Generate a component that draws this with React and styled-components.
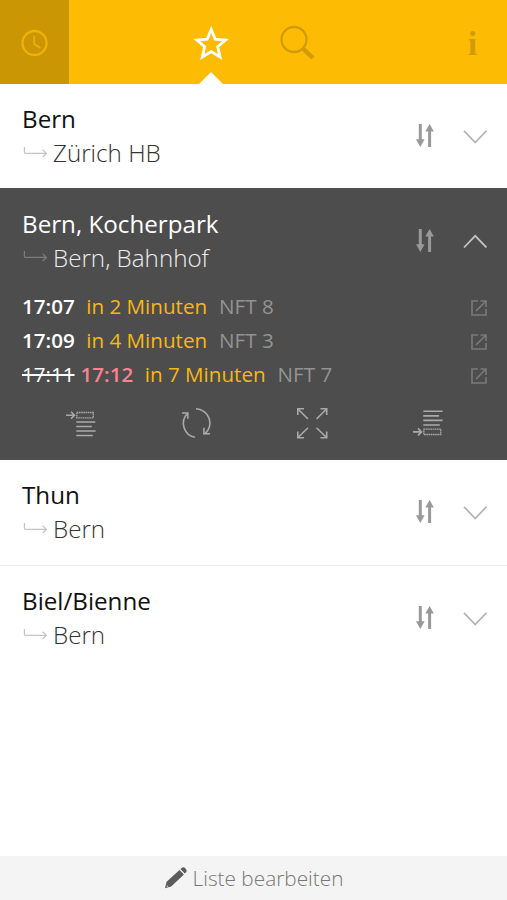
import React, { useState } from "react";
import styled, { createGlobalStyle } from "styled-components";

const GlobalStyle = createGlobalStyle`
  body {
    margin: 0;
    background: #fff;
    font-family: "Open Sans", sans-serif;
  }
`;

const Page = styled.div`
  display: flex;
  flex-direction: column;
  height: 900px;
  width: 100%;
  overflow: hidden;
`;

const Header = styled.header`
  display: grid;
  grid-template-columns: 68.5px 99.5px 86px 86px 1fr 69px;
  height: 83.6px;
  flex: none;
  background: #fdbb04;
`;

const Tab = styled.button`
  position: relative;
  display: flex;
  align-items: center;
  justify-content: center;
  grid-column: ${props => props.column};
  margin: 0;
  padding: 3px 0 0;
  border: 0;
  color: ${props =>
    props.isActive ? "#fff" : props.shaded ? "#f0b204" : "#d19b05"};
  background: ${props => (props.shaded ? "#cb9603" : "transparent")};
`;

const Pointer = styled.svg`
  position: absolute;
  bottom: 0;
  left: 31px;
`;

const InfoGlyph = styled.span`
  padding-top: 2px;
  font: bold 34px/34px "Liberation Serif", serif;
  color: #d19c06;
`;

const Connection = styled.section`
  box-sizing: border-box;
  flex: none;
  height: ${props => (props.isOpen ? "271.4px" : "104.8px")};
  padding: 18.2px 20px 0 22px;
  color: ${props => (props.isOpen ? "#fff" : "#111")};
  background: ${props => (props.isOpen ? "#4d4d4d" : "#fff")};
  border-top: ${props => (props.divider ? "1px solid #eaeaea" : "0")};
`;

const Summary = styled.div`
  display: flex;
  justify-content: space-between;
`;

const From = styled.div`
  font-size: 24.2px;
  line-height: 34px;
  white-space: nowrap;
`;

const To = styled.div`
  display: flex;
  align-items: center;
  gap: 6px;
  font-size: 24.2px;
  font-weight: 300;
  line-height: 33.6px;
  white-space: nowrap;
  color: ${props => (props.isOpen ? "#eee" : "#333")};
  svg {
    color: ${props => (props.isOpen ? "#7c7c7c" : "#c4c4c4")};
  }
`;

const Controls = styled.div`
  display: flex;
  gap: 28px;
  padding-top: 20.4px;
  svg {
    display: block;
  }
`;

const Toggle = styled.div`
  cursor: pointer;
  color: ${props => (props.isOpen ? "#c4c4c4" : "#b4b4b4")};
`;

const Departures = styled.div`
  padding-top: 14.6px;
`;

const Departure = styled.div`
  display: flex;
  align-items: center;
  height: 34px;
  font-size: 20.6px;
  line-height: 34px;
  white-space: nowrap;
  svg {
    margin: 5px -1px 0 auto;
    color: #7a7a7a;
  }
`;

const Time = styled.span`
  font-weight: ${props => (props.cancelled ? 400 : 600)};
  text-decoration: ${props => (props.cancelled ? "line-through" : "none")};
  color: ${props => (props.delayed ? "#f98390" : "#fff")};
  margin-left: ${props => (props.delayed ? "6px" : "0")};
`;

const Countdown = styled.span`
  margin-left: 11.5px;
  color: #f7b815;
`;

const Line = styled.span`
  margin-left: 12px;
  color: #939393;
`;

const Actions = styled.div`
  display: flex;
  justify-content: space-between;
  padding: 16.4px 43px 0 42.5px;
  color: #aaa;
`;

const Footer = styled.footer`
  display: flex;
  align-items: center;
  justify-content: center;
  gap: 5px;
  height: 44px;
  margin-top: auto;
  flex: none;
  background: #f4f4f4;
  color: #777;
  font-size: 20.8px;
  font-weight: 300;
  line-height: 44px;
`;

const Icon = ({ width, height, stroke = 1.6, children }) => (
  <svg
    width={width}
    height={height}
    viewBox={`0 0 ${width} ${height}`}
    fill="none"
    stroke="currentColor"
    strokeWidth={stroke}
  >
    {children}
  </svg>
);

const ClockIcon = () => (
  <Icon width={28} height={28} stroke={2.3}>
    <circle cx="14.5" cy="14" r="12" />
    <path d="M14.2 7v8l6.2 4" strokeWidth="1.6" />
  </Icon>
);

const StarIcon = () => (
  <Icon width={36} height={36} stroke={2.8}>
    <path d="M18.2 4.5l4 9.6 10.3.9-7.8 6.8 2.4 10.2-8.9-5.4-8.9 5.4 2.4-10.2L3.9 15l10.3-.9z" />
  </Icon>
);

const SearchIcon = () => (
  <Icon width={36} height={36} stroke={2.3}>
    <circle cx="15" cy="14.5" r="12.5" />
    <path d="M24 23.5l10 9.5" strokeWidth="4.4" />
  </Icon>
);

const SwapIcon = () => (
  <Icon width={20} height={26} stroke={3}>
    <g color="#999" stroke="currentColor">
      <path d="M5.3 2v17M14.6 9v16" />
      <path d="M1 17.2h8.6L5.3 25zM10.3 9.6h8.6L14.6 2z" fill="currentColor" stroke="none" />
    </g>
  </Icon>
);

const ChevronIcon = ({ up }) => (
  <Icon width={24} height={26} stroke={1.8}>
    <path d={up ? "M1 20.5L12.2 8.8l11.2 11.7" : "M1 8.8l11.2 11.7L23.4 8.8"} />
  </Icon>
);

const ThenIcon = () => (
  <Icon width={25} height={12} stroke={1.2}>
    <path d="M2.4 0v5.2q0 1.2 1.2 1.2h21M20.7 2.8l3.7 3.6-3.7 3.6" />
  </Icon>
);

const ExternalIcon = () => (
  <Icon width={18} height={18} stroke={1.6}>
    <path d="M8 2H2v14h14v-6M10.5 2H16v6M16 2L6 12" />
  </Icon>
);

const EarlierIcon = () => (
  <Icon width={32} height={32}>
    <path d="M1 8.3h8M6 4.8l3.5 3.5L6 11.8" />
    <path d="M11.3 15h19M11.3 19.5h15.5M11.3 24h19.3M11.3 28.5h16.5" />
    <path d="M11.8 5.5h16.5v5.3H11.8z" strokeDasharray="1.6 .6" strokeWidth="1.3" />
  </Icon>
);

const LaterIcon = () => (
  <Icon width={32} height={32}>
    <path d="M1 24.9h8M6 21.4l3.5 3.5L6 28.4" />
    <path d="M11.3 4.3h19.3M11.3 8.9h15.8M11.3 13.4h19.3M11.3 18h16.5" />
    <path d="M11.8 22.2h17v5.3h-17z" strokeDasharray="1.6 .6" strokeWidth="1.3" />
  </Icon>
);

const RefreshIcon = () => (
  <Icon width={32} height={32}>
    <path d="M16 1.8a14.2 14.2 0 0 1 8.6 25.3M15 30.2A14.2 14.2 0 0 1 7.3 6.5" />
    <path d="M23.9 20.8v6h6.2M2 6h5.8v5.7" />
  </Icon>
);

const ExpandIcon = () => (
  <Icon width={32} height={32}>
    <path d="M12 12L2 2M20.5 12l10-10M12 20.7L2 30.5M20.5 20.7l10 9.8" />
    <path d="M1.8 8V1.8H8M24.5 1.8h6.2V8M1.8 24.5v6.2H8M24.5 30.7h6.2v-6.2" />
  </Icon>
);

const PencilIcon = () => (
  <svg width="24" height="24" viewBox="0 0 24 24" fill="#5c5c5c">
    <path d="M1 22.2l1.6-6.4L15.5 3.9l4.4 4.6L7.2 20.4zM16.4 3.1l1.5-1.4q1.6-1.2 3.6.8t.8 3.6l-1.5 1.5z" />
    <path d="M3 19l1.6 1.6-2 .6z" fill="#bbb" />
  </svg>
);

const connections = [
  { id: 1, from: "Bern", to: "Zürich HB" },
  {
    id: 2,
    from: "Bern, Kocherpark",
    to: "Bern, Bahnhof",
    departures: [
      { time: "17:07", minutes: 2, line: "NFT 8" },
      { time: "17:09", minutes: 4, line: "NFT 3" },
      { time: "17:11", delayed: "17:12", minutes: 7, line: "NFT 7" }
    ]
  },
  { id: 3, from: "Thun", to: "Bern" },
  { id: 4, from: "Biel/Bienne", to: "Bern", divider: true }
];

const ConnectionItem = ({ connection, isOpen, onToggle }) => (
  <Connection isOpen={isOpen} divider={connection.divider}>
    <Summary>
      <div>
        <From>{connection.from}</From>
        <To isOpen={isOpen}>
          <ThenIcon />
          {connection.to}
        </To>
      </div>
      <Controls>
        <SwapIcon />
        <Toggle isOpen={isOpen} onClick={onToggle}>
          <ChevronIcon up={isOpen} />
        </Toggle>
      </Controls>
    </Summary>
    {isOpen && (
      <>
        <Departures>
          {(connection.departures || []).map(dep => (
            <Departure key={dep.time}>
              <Time cancelled={!!dep.delayed}>{dep.time}</Time>
              {dep.delayed && <Time delayed>{dep.delayed}</Time>}
              <Countdown>in {dep.minutes} Minuten</Countdown>
              <Line>{dep.line}</Line>
              <ExternalIcon />
            </Departure>
          ))}
        </Departures>
        <Actions>
          <EarlierIcon />
          <RefreshIcon />
          <ExpandIcon />
          <LaterIcon />
        </Actions>
      </>
    )}
  </Connection>
);

const App = () => {
  const [openId, setOpenId] = useState(2);

  return (
    <Page>
      <GlobalStyle />
      <Header>
        <Tab column={1} shaded>
          <ClockIcon />
        </Tab>
        <Tab column={3} isActive>
          <StarIcon />
          <Pointer width="24" height="12" viewBox="0 0 24 12" fill="#fff">
            <path d="M0 12L12 0l12 12z" />
          </Pointer>
        </Tab>
        <Tab column={4}>
          <SearchIcon />
        </Tab>
        <Tab column={6}>
          <InfoGlyph>i</InfoGlyph>
        </Tab>
      </Header>
      {connections.map(connection => (
        <ConnectionItem
          key={connection.id}
          connection={connection}
          isOpen={openId === connection.id}
          onToggle={() =>
            setOpenId(openId === connection.id ? null : connection.id)
          }
        />
      ))}
      <Footer>
        <PencilIcon />
        Liste bearbeiten
      </Footer>
    </Page>
  );
};

export default App;
